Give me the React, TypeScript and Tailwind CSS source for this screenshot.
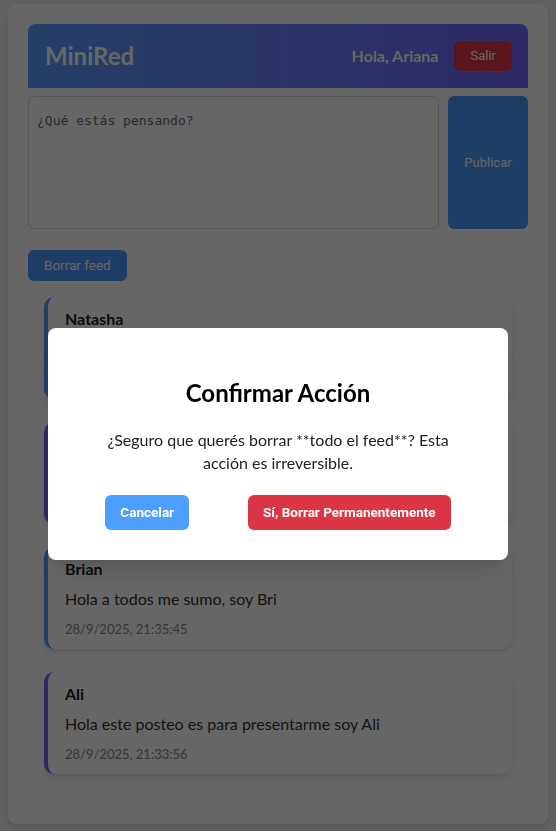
import React from "react";

type Post = { id: number; author: string; text: string; date: string; accent: string };

const posts: Post[] = [
  { id: 4, author: "Natasha", text: "Buenas! Me encanta esta red", date: "28/9/2025, 21:40:12", accent: "border-[#4c9bff]" },
  { id: 3, author: "Ariana", text: "Primer posteo del día", date: "28/9/2025, 21:38:02", accent: "border-[#7a62ff]" },
  { id: 2, author: "Brian", text: "Hola a todos me sumo, soy Bri", date: "28/9/2025, 21:35:45", accent: "border-[#4c9bff]" },
  { id: 1, author: "Ali", text: "Hola este posteo es para presentarme soy Ali", date: "28/9/2025, 21:33:56", accent: "border-[#7a62ff]" },
];

export default function App() {
  return (
    <div className="min-h-screen bg-[#f0f0f0] pt-1 pb-2 font-['Lato','Noto_Sans',sans-serif] text-[#222]">
      {/* Main card */}
      <div className="max-w-[540px] mx-auto bg-white rounded-lg shadow-md p-5">
        {/* Header */}
        <header className="h-16 flex items-center justify-between pl-[17px] pr-4 rounded-t-lg bg-gradient-to-r from-[#5a9dff] to-[#7468ff] text-white">
          <h1 className="text-2xl font-bold">MiniRed</h1>
          <div className="flex items-center gap-4">
            <span className="text-base font-bold">Hola, Ariana</span>
            <button className="h-[30px] px-4 rounded-md bg-[#dc3545] text-[13px] font-['Roboto',sans-serif]">
              Salir
            </button>
          </div>
        </header>

        {/* Composer */}
        <div className="mt-2 flex gap-[9px]">
          <textarea
            placeholder="¿Qué estás pensando?"
            className="flex-1 h-[133px] rounded-md border border-[#d8d8d8] px-2 pt-[14px] pb-2 text-[13px] font-['DejaVu_Sans_Mono',monospace] placeholder:text-[#6a6a6a] resize-none outline-none"
          />
          <button className="w-[80px] h-[133px] rounded-md bg-[#4c9bff] text-white text-[13px] font-['Roboto',sans-serif]">
            Publicar
          </button>
        </div>

        <button className="mt-[21px] h-[31px] px-4 rounded-md bg-[#4c9bff] text-white text-[13.5px] font-['Roboto',sans-serif]">
          Borrar feed
        </button>

        {/* Feed */}
        <div className="mt-4 px-4 flex flex-col gap-[23px]">
          {posts.map((p) => (
            <div key={p.id} className={`bg-white rounded-[10px] shadow-md border-l-4 ${p.accent} pl-[17px] pr-4 py-[10px]`}>
              <h3 className="text-base leading-6 font-bold text-[#222]">{p.author}</h3>
              <p className="mt-[6px] text-base leading-6 text-[#333]">{p.text}</p>
              <p className="mt-2 text-[13px] leading-5 text-[#888]">{p.date}</p>
            </div>
          ))}
        </div>
        <div className="h-[30px]" />
      </div>

      {/* Modal */}
      <div className="fixed inset-0 bg-black/60 flex justify-center items-start pt-[328px]">
        <div className="w-[460px] bg-white rounded-lg shadow-xl p-[30px] text-center">
          <h2 className="mt-[19px] text-2xl leading-8 font-bold text-black">Confirmar Acción</h2>
          <p className="mt-5 mx-auto max-w-[365px] text-base leading-[22.5px] text-[#222]">
            ¿Seguro que querés borrar **todo el feed**? Esta acción es irreversible.
          </p>
          <div className="mt-[21px] flex justify-center gap-[59px]">
            <button className="h-[35px] px-[15px] rounded-md bg-[#4c9eff] text-white text-[13.5px] font-bold font-['Roboto',sans-serif]">
              Cancelar
            </button>
            <button className="h-[35px] px-[15px] rounded-md bg-[#dc3545] text-white text-[13.5px] font-bold font-['Roboto',sans-serif]">
              Sí, Borrar Permanentemente
            </button>
          </div>
        </div>
      </div>
    </div>
  );
}
